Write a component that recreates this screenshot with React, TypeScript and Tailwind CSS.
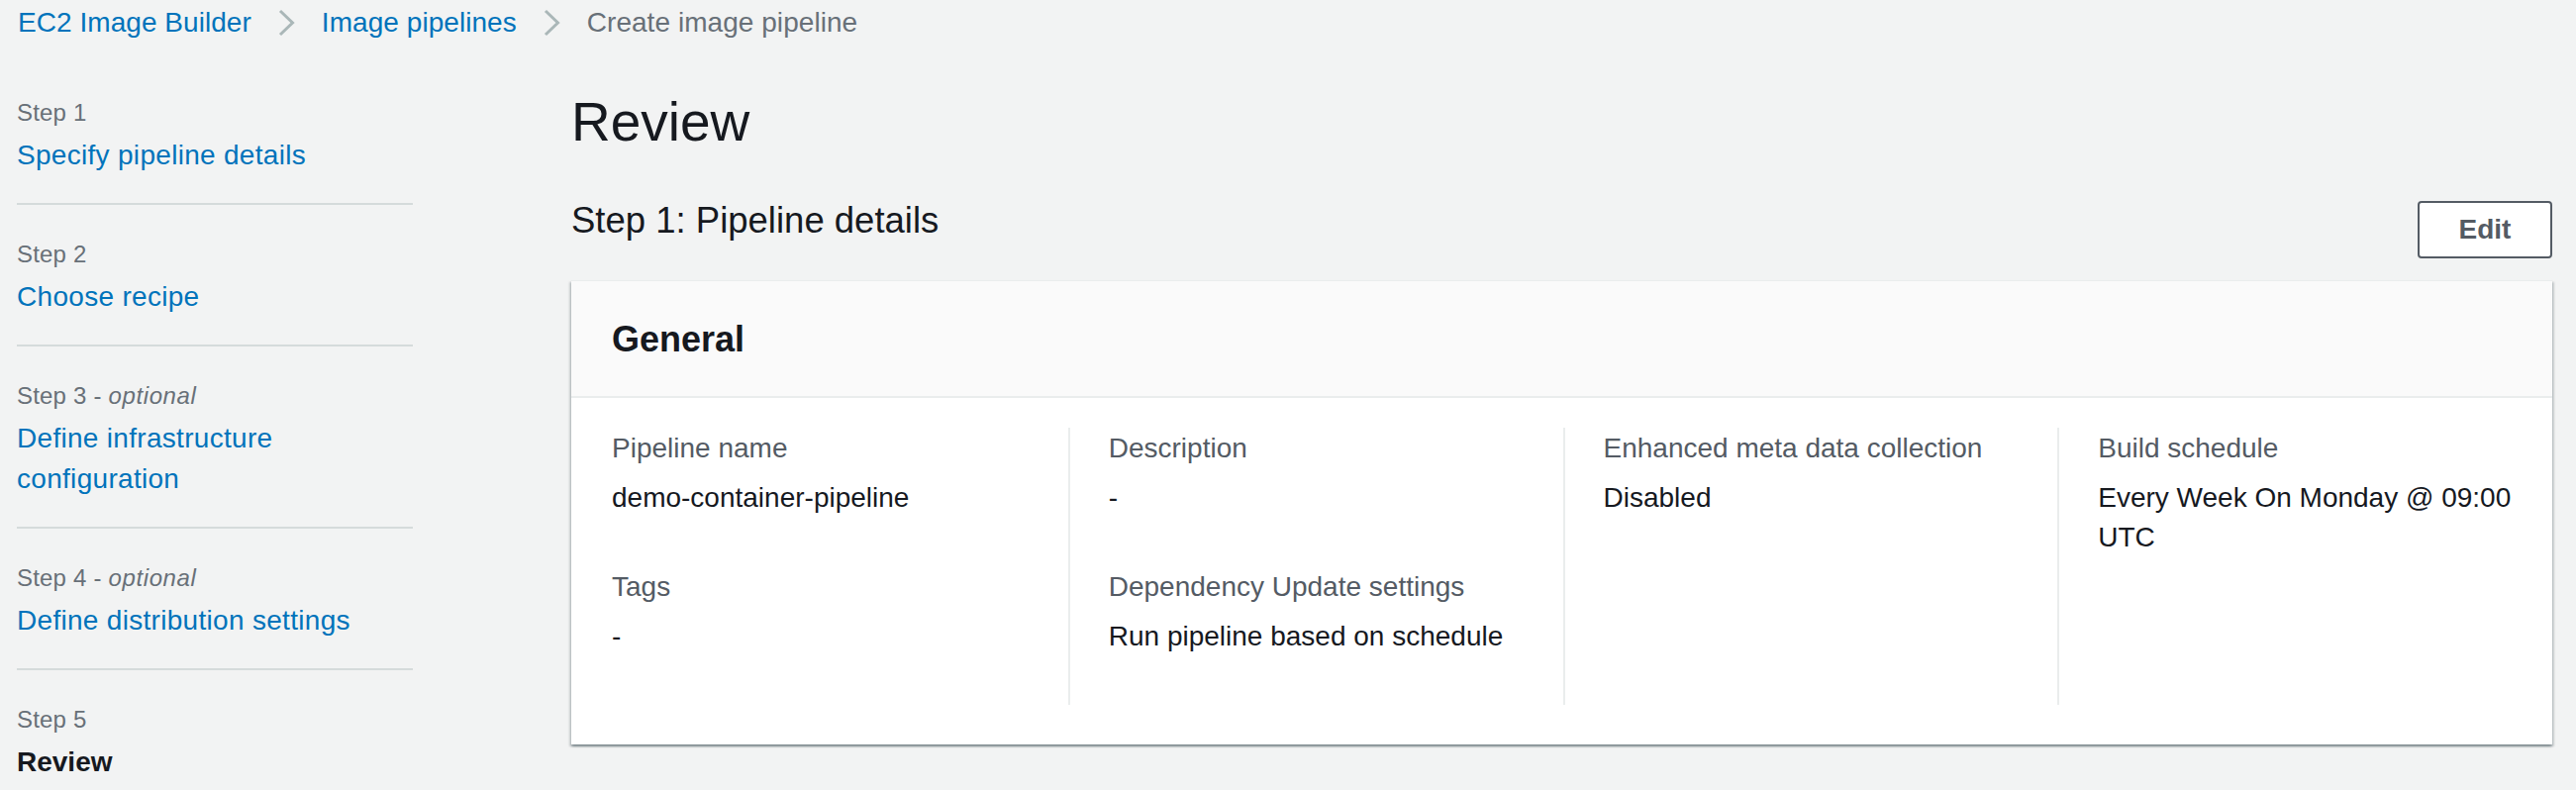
import React from "react";

const Chevron = () => (
  <svg width="17" height="28" viewBox="0 0 17 28" className="shrink-0 mx-[27px]">
    <path d="M2 2 L14.5 14 L2 26" fill="none" stroke="#aab7b8" strokeWidth="3" strokeLinecap="butt" strokeLinejoin="miter" />
  </svg>
);

type Step = { n: number; optional?: boolean; title: string; current?: boolean };

const steps: Step[] = [
  { n: 1, title: "Specify pipeline details" },
  { n: 2, title: "Choose recipe" },
  { n: 3, optional: true, title: "Define infrastructure configuration" },
  { n: 4, optional: true, title: "Define distribution settings" },
  { n: 5, title: "Review", current: true },
];

const KV = ({ label, value }: { label: string; value: string }) => (
  <div>
    <div className="text-[28px] leading-[40px] text-[#545b64]">{label}</div>
    <div className="mt-[10px] text-[28px] leading-[40px] text-[#16191f]">{value}</div>
  </div>
);

export default function App() {
  return (
    <div
      className="min-h-[798px] w-[2602px] bg-[#f2f3f3] pl-[17px] pr-[24px]"
      style={{ fontFamily: '"Liberation Sans", Arial, sans-serif' }}
    >
      <div className="flex items-center pt-[3px] text-[28px] leading-[40px] tracking-[0.05px] pl-[1px]">
        <span className="text-[#0073bb]">EC2 Image Builder</span>
        <Chevron />
        <span className="text-[#0073bb]">Image pipelines</span>
        <Chevron />
        <span className="text-[#687078]">Create image pipeline</span>
      </div>

      <div className="flex">
        <nav className="w-[401px] shrink-0 pt-[55px]">
          {steps.map((s, i) => (
            <div key={s.n}>
              <div className="text-[24px] leading-[32px] tracking-[0.2px] text-[#687078]">
                Step {s.n}
                {s.optional && (
                  <>
                    {" - "}
                    <i className="tracking-[0.6px]">optional</i>
                  </>
                )}
              </div>
              <div
                className={
                  s.current
                    ? "mt-[6px] text-[28px] leading-[41px] font-bold text-[#16191f]"
                    : "mt-[6px] text-[28px] leading-[41px] tracking-[0.3px] text-[#0073bb]"
                }
              >
                {s.title}
              </div>
              {i < steps.length - 1 && (
                <div className="mt-[28px] mb-[34px] h-[2px] w-[400px] bg-[#d5dbdb]" />
              )}
            </div>
          ))}
        </nav>

        <main className="ml-[159px] flex-1 pt-[48px]">
          <h1 className="text-[55px] leading-[64px] font-normal text-[#16191f]">Review</h1>

          <div className="mt-[46px] flex items-start justify-between">
            <h2 className="text-[36.5px] leading-[44px] font-normal text-[#16191f]">
              Step 1: Pipeline details
            </h2>
            <button className="mt-[2px] h-[58px] w-[136px] rounded-[4px] border-2 border-[#545b64] bg-white text-[28px] font-bold text-[#545b64]">
              Edit
            </button>
          </div>

          <div className="mt-[22px] bg-white shadow-[0_2px_2px_0_rgba(0,28,36,0.3),2px_2px_2px_0_rgba(0,28,36,0.15),-2px_2px_2px_0_rgba(0,28,36,0.15)]">
            <div className="border-t border-[#eaeded] border-b-2 border-b-[#eaeded] bg-[#fafafa] px-[41px] pt-[37px] pb-[35px]">
              <h3 className="text-[36px] leading-[44px] font-bold text-[#16191f]">General</h3>
            </div>
            <div className="grid grid-cols-4 pl-[2px] pt-[30px] pb-[40px]">
              <div className="flex flex-col gap-[50px] pl-[39px] pr-[20px] pt-[1px] pb-[49px]">
                <KV label="Pipeline name" value="demo-container-pipeline" />
                <KV label="Tags" value="-" />
              </div>
              <div className="flex flex-col gap-[50px] border-l-2 border-[#eaeded] pl-[39px] pr-[20px] pt-[1px] pb-[49px]">
                <KV label="Description" value="-" />
                <KV label="Dependency Update settings" value="Run pipeline based on schedule" />
              </div>
              <div className="flex flex-col gap-[50px] border-l-2 border-[#eaeded] pl-[39px] pr-[20px] pt-[1px] pb-[49px]">
                <KV label="Enhanced meta data collection" value="Disabled" />
              </div>
              <div className="flex flex-col gap-[50px] border-l-2 border-[#eaeded] pl-[39px] pr-[20px] pt-[1px] pb-[49px]">
                <KV label="Build schedule" value="Every Week On Monday @ 09:00 UTC" />
              </div>
            </div>
          </div>
        </main>
      </div>
    </div>
  );
}
